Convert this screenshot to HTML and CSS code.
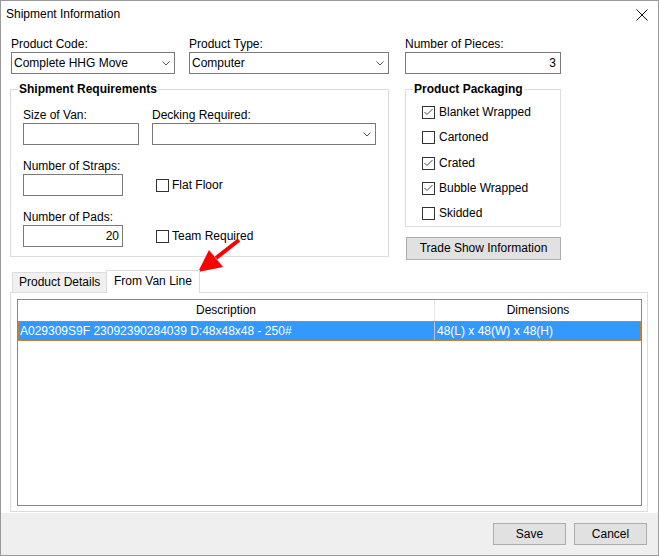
FILE: index.html
```html
<!DOCTYPE html>
<html lang="en">
<head>
    <meta charset="UTF-8">
    <title>Shipment Information</title>
    <link rel="stylesheet" href="styles.css">
</head>
<body>
    <div class="window">
        <div class="titlebar">
            <span class="title">Shipment Information</span>
            <svg class="close" width="12" height="12" viewBox="0 0 12 12"><path d="M0.5 0.5 L11.5 11.5 M11.5 0.5 L0.5 11.5" stroke="#111" stroke-width="1" fill="none"/></svg>
        </div>

        <div class="main">
            <div class="top-row">
                <div class="field code">
                    <label>Product Code:</label>
                    <div class="combo"><span>Complete HHG Move</span><svg width="8" height="5" viewBox="0 0 8 5"><polyline points="0.5,0.5 4,4 7.5,0.5" stroke="#555" fill="none"/></svg></div>
                </div>
                <div class="field type">
                    <label>Product Type:</label>
                    <div class="combo"><span>Computer</span><svg width="8" height="5" viewBox="0 0 8 5"><polyline points="0.5,0.5 4,4 7.5,0.5" stroke="#555" fill="none"/></svg></div>
                </div>
                <div class="field pieces">
                    <label>Number of Pieces:</label>
                    <div class="input num">3</div>
                </div>
            </div>

            <div class="middle">
                <fieldset class="group req">
                    <legend>Shipment Requirements</legend>
                    <div class="req-grid">
                        <div class="field">
                            <label>Size of Van:</label>
                            <div class="input w116"></div>
                        </div>
                        <div class="field">
                            <label>Decking Required:</label>
                            <div class="combo"><span></span><svg width="8" height="5" viewBox="0 0 8 5"><polyline points="0.5,0.5 4,4 7.5,0.5" stroke="#555" fill="none"/></svg></div>
                        </div>
                        <div class="field">
                            <label>Number of Straps:</label>
                            <div class="input w100"></div>
                        </div>
                        <div class="check-cell">
                            <div class="check"><span class="box"></span>Flat Floor</div>
                        </div>
                        <div class="field">
                            <label>Number of Pads:</label>
                            <div class="input num w100 pads">20</div>
                        </div>
                        <div class="check-cell">
                            <div class="check"><span class="box"></span>Team Required</div>
                        </div>
                    </div>
                </fieldset>

                <div class="side">
                    <fieldset class="group pack">
                        <legend>Product Packaging</legend>
                        <div class="check"><span class="box"><svg width="11" height="11" viewBox="0 0 11 11"><polyline points="1.5,5 4,7.5 9.5,2" stroke="#444" fill="none"/></svg></span>Blanket Wrapped</div>
                        <div class="check"><span class="box"></span>Cartoned</div>
                        <div class="check"><span class="box"><svg width="11" height="11" viewBox="0 0 11 11"><polyline points="1.5,5 4,7.5 9.5,2" stroke="#444" fill="none"/></svg></span>Crated</div>
                        <div class="check"><span class="box"><svg width="11" height="11" viewBox="0 0 11 11"><polyline points="1.5,5 4,7.5 9.5,2" stroke="#444" fill="none"/></svg></span>Bubble Wrapped</div>
                        <div class="check"><span class="box"></span>Skidded</div>
                    </fieldset>
                    <button class="btn trade">Trade Show Information</button>
                </div>
            </div>

            <div class="tabs">
                <div class="tab tab-off">Product Details</div>
                <div class="tab tab-on">From Van Line</div>
            </div>
            <div class="panel">
                <div class="grid">
                    <div class="grid-head">
                        <div>Description</div>
                        <div class="col2">Dimensions</div>
                    </div>
                    <div class="grid-row">
                        <div>A029309S9F 23092390284039 D:48x48x48 - 250#</div>
                        <div class="col2">48(L) x 48(W) x 48(H)</div>
                    </div>
                </div>
            </div>
        </div>

        <div class="footer">
            <button class="btn">Save</button>
            <button class="btn">Cancel</button>
        </div>

        <svg class="arrow" width="56" height="48" viewBox="0 0 56 48">
            <line x1="49" y1="10" x2="26" y2="28" stroke="#f00" stroke-width="4"/>
            <polygon points="8,42 19,20 33,37" fill="#f00"/>
        </svg>
    </div>
</body>
</html>
```

FILE: styles.css
```css
* {
    box-sizing: border-box;
}

body {
    margin: 0;
    font-family: "Liberation Sans", Arial, sans-serif;
    font-size: 12px;
    line-height: 15px;
    color: #000;
}

.window {
    position: relative;
    width: 659px;
    height: 556px;
    border: 1px solid #9a9a9a;
    background: #fff;
    display: flex;
    flex-direction: column;
    overflow: hidden;
}

.titlebar {
    height: 27px;
    display: flex;
    align-items: center;
    justify-content: space-between;
    padding: 0 10px 0 5px;
}

.main {
    flex: 1;
    display: flex;
    flex-direction: column;
    padding: 9px 10px 0 9px;
}

.top-row {
    display: flex;
    padding-left: 1px;
}

.field label {
    display: block;
    height: 15px;
}

.code {
    width: 164px;
    margin-right: 14px;
}

.type {
    width: 200px;
    margin-right: 16px;
}

.pieces {
    width: 156px;
}

.input,
.combo {
    height: 22px;
    border: 1px solid #7a7a7a;
    background: #fff;
    display: flex;
    align-items: center;
    padding: 0 2px;
}

.combo {
    justify-content: space-between;
    padding-right: 4px;
}

.num {
    justify-content: flex-end;
    padding-right: 4px;
}

.pads {
    padding-right: 3px;
}

.w116 {
    width: 116px;
}

.w100 {
    width: 100px;
}

.middle {
    display: flex;
    align-items: flex-start;
    margin-top: 8px;
}

.group {
    margin: 0;
    border: 1px solid #dcdcdc;
    min-width: 0;
}

.group legend {
    font-weight: bold;
    padding: 0 1px;
    line-height: 15px;
}

.req {
    width: 379px;
    padding: 11px 12px 9px 12px;
}

.req legend {
    margin-left: -5px;
}

.req-grid {
    display: grid;
    grid-template-columns: 129px 224px;
    row-gap: 14px;
}

.check-cell {
    display: flex;
    align-items: flex-end;
    padding-left: 4px;
}

.check {
    display: flex;
    align-items: center;
    height: 22px;
}

.req .check {
    padding-top: 1px;
}

.box {
    width: 13px;
    height: 13px;
    border: 1px solid #333;
    background: #fff;
    margin-right: 3px;
    display: flex;
}

.side {
    width: 156px;
    margin-left: 16px;
}

.pack {
    padding: 3px 0 0 16px;
}

.pack legend {
    margin-left: -9px;
}

.pack .check {
    height: 25.25px;
}

.pack .box {
    margin-right: 4px;
}

.btn {
    height: 22px;
    border: 1px solid #adadad;
    background: #e1e1e1;
    font: inherit;
    color: #000;
    padding: 0;
}

.trade {
    display: block;
    width: 155px;
    height: 23px;
    margin: 10px 0 0 1px;
}

.tabs {
    display: flex;
    align-items: flex-end;
    height: 22px;
    margin-top: 10px;
    padding-left: 2px;
}

.tab {
    border: 1px solid #dcdcdc;
    border-bottom: none;
    display: flex;
    align-items: center;
}

.tab-off {
    width: 95px;
    height: 20px;
    background: #f0f0f0;
    padding-left: 6px;
}

.tab-on {
    position: relative;
    z-index: 1;
    width: 94px;
    height: 23px;
    margin-left: -1px;
    margin-bottom: -1px;
    background: #fff;
    padding: 0 0 2px 7px;
}

.panel {
    flex: 1;
    display: flex;
    border: 1px solid #dcdcdc;
    margin-bottom: 1px;
    padding: 6px 5px 5px 6px;
}

.grid {
    flex: 1;
    border: 1px solid #828790;
    background: #fff;
}

.grid-head,
.grid-row {
    display: grid;
    grid-template-columns: 416px 207px;
}

.grid-head div {
    height: 21px;
    line-height: 21px;
    text-align: center;
}

.grid-head .col2 {
    border-left: 1px solid #e5e5e5;
}

.grid-row {
    height: 20px;
    background: #3399ff;
    color: #fff;
    outline: 1px dotted #c8873f;
    outline-offset: -1px;
}

.grid-row div {
    line-height: 20px;
    padding-left: 2px;
    white-space: nowrap;
}

.grid-row .col2 {
    border-left: 1px solid #b9c9da;
}

.footer {
    height: 42px;
    background: #efefef;
    display: flex;
    justify-content: flex-end;
    gap: 8px;
    padding: 10px 11px 0 0;
}

.footer .btn {
    width: 73px;
}

.arrow {
    position: absolute;
    left: 189px;
    top: 229px;
}
```
